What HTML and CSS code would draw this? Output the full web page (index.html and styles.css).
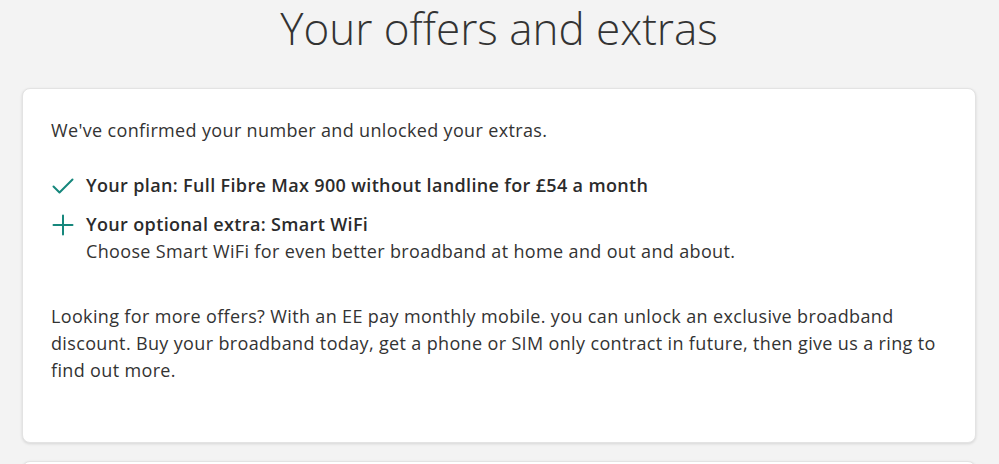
FILE: index.html
```html
<!DOCTYPE html>
<html lang="en">
<head>
<meta charset="utf-8">
<title>Your offers and extras</title>
<link rel="stylesheet" href="styles.css">
</head>
<body>
<main class="page">
  <h1 class="title">Your offers and extras</h1>
  <section class="card">
    <p class="intro">We've confirmed your number and unlocked your extras.</p>
    <ul class="items">
      <li class="item">
        <svg class="icon" viewBox="0 0 24 24" width="24" height="24" aria-hidden="true"><polyline points="2.5,12.5 8.5,18.5 21.5,5.5" fill="none" stroke="#16877c" stroke-width="2" stroke-linecap="round" stroke-linejoin="round"/></svg>
        <div class="item-body">
          <strong class="item-title">Your plan: Full Fibre Max 900 without landline for £54 a month</strong>
        </div>
      </li>
      <li class="item">
        <svg class="icon" viewBox="0 0 24 24" width="24" height="24" aria-hidden="true"><path d="M12 2.5V21.5M2.5 12H21.5" fill="none" stroke="#16877c" stroke-width="2" stroke-linecap="round"/></svg>
        <div class="item-body">
          <strong class="item-title">Your optional extra: Smart WiFi</strong>
          <span class="item-desc">Choose Smart WiFi for even better broadband at home and out and about.</span>
        </div>
      </li>
    </ul>
    <p class="more">Looking for more offers? With an EE pay monthly mobile. you can unlock an exclusive broadband discount. Buy your broadband today, get a phone or SIM only contract in future, then give us a ring to find out more.</p>
  </section>
  <section class="card card-next"></section>
</main>
</body>
</html>
```
FILE: styles.css
```css
html, body {
  margin: 0;
  padding: 0;
  background: #f3f3f3;
}
body {
  font-family: "Open Sans", "Liberation Sans", sans-serif;
  color: #333333;
  overflow: hidden;
}
.page {
  padding: 0 23px 0 22px;
}
.title {
  margin: 0;
  font-size: 44px;
  line-height: 56px;
  font-weight: 300;
  text-align: center;
  color: #333333;
}
.card {
  margin-top: 32px;
  background: #ffffff;
  border: 1px solid #e3e3e3;
  border-radius: 8px;
  box-shadow: 0 1px 3px rgba(0, 0, 0, 0.12);
  padding: 28px 28px 58px 28px;
  font-size: 18px;
  line-height: 27px;
  letter-spacing: 0.35px;
}
.card-next {
  margin-top: 18px;
  height: 40px;
  padding: 0;
}
.intro {
  margin: 0 0 28px 0;
}
.items {
  list-style: none;
  margin: 0;
  padding: 0;
}
.item {
  display: flex;
  align-items: flex-start;
  gap: 11px;
  margin-bottom: 12px;
}
.item:last-child {
  margin-bottom: 0;
}
.icon {
  flex: none;
  margin-top: 2px;
}
.item-body {
  display: flex;
  flex-direction: column;
}
.item-title {
  font-weight: 600;
  color: #2b2b2b;
}
.more {
  margin: 38px 0 0 0;
}
```
